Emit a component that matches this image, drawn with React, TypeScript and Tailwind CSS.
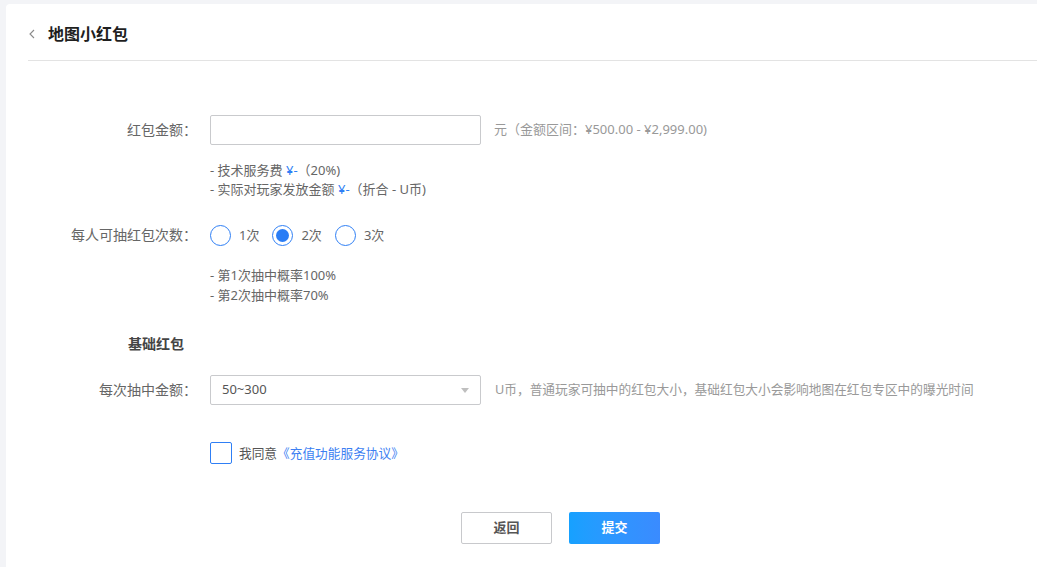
import { useState } from 'react'

const font = { fontFamily: '"Noto Sans", "Noto Sans CJK SC", sans-serif' }

function Radio({ checked, label, onClick }: { checked: boolean; label: string; onClick: () => void }) {
  return (
    <button type="button" onClick={onClick} className="flex items-center gap-[8px]">
      <span className="flex h-[21px] w-[21px] items-center justify-center rounded-full border border-[#2f7ff5] bg-white">
        {checked && <span className="h-[13px] w-[13px] rounded-full bg-[#2a7df5]" />}
      </span>
      <span className="text-[13px] leading-[21px] text-[#666]">{label}</span>
    </button>
  )
}

export default function App() {
  const [times, setTimes] = useState(2)
  const [agree, setAgree] = useState(false)

  return (
    <div className="min-h-screen bg-[#f3f4f7] pl-[6px] pt-[4px]" style={font}>
      <div className="h-[563px] rounded-tl-[4px] bg-white">
        {/* Header */}
        <div className="ml-[22px] flex h-[57px] items-center border-b border-[#e3e3e3] pt-[3px]">
          <svg className="ml-[1px] h-[10px] w-[6px]" viewBox="0 0 6 10" fill="none">
            <path d="M5 1 L1 5 L5 9" stroke="#8a8a8a" strokeWidth="1.1" />
          </svg>
          <span className="ml-[13px] text-[16px] font-bold leading-[22px] text-[#1f1f1f]">地图小红包</span>
        </div>

        {/* Form */}
        <div className="mt-[54px]">
          <div className="flex items-center">
            <label className="w-[191px] text-right text-[14px] leading-[30px] text-[#666]">红包金额：</label>
            <input className="ml-[13px] h-[30px] w-[271px] rounded-[2px] border border-[#c9cacd] px-[10px] text-[13px] outline-none" />
            <span className="ml-[13px] text-[13px] text-[#999]">元（金额区间：¥500.00 - ¥2,999.00)</span>
          </div>

          <div className="ml-[204px] mt-[16px] text-[13px] leading-[19px] text-[#666]">
            <div>
              - 技术服务费 <span className="text-[#2f7ff5]">¥-</span>（20%)
            </div>
            <div>
              - 实际对玩家发放金额 <span className="text-[#2f7ff5]">¥-</span>（折合 - U币)
            </div>
          </div>

          <div className="mt-[25px] flex items-center">
            <label className="w-[191px] text-right text-[14px] leading-[22px] text-[#666]">每人可抽红包次数：</label>
            <div className="ml-[13px] flex items-center gap-[13px]">
              {[1, 2, 3].map((n) => (
                <Radio key={n} checked={times === n} label={`${n}次`} onClick={() => setTimes(n)} />
              ))}
            </div>
          </div>

          <div className="ml-[204px] mt-[19px] text-[13px] leading-[20px] text-[#666]">
            <div>- 第1次抽中概率100%</div>
            <div>- 第2次抽中概率70%</div>
          </div>

          <div className="ml-[122px] mt-[29px] text-[14px] font-bold leading-[20px] text-[#444]">基础红包</div>

          <div className="mt-[21px] flex items-center">
            <label className="w-[191px] text-right text-[14px] leading-[30px] text-[#666]">每次抽中金额：</label>
            <div className="ml-[13px] flex h-[30px] w-[271px] items-center justify-between rounded-[2px] border border-[#c9cacd] pl-[11px] pr-[11px]">
              <span className="text-[13px] text-[#555]">50~300</span>
              <svg className="h-[5px] w-[8px]" viewBox="0 0 8 5">
                <path d="M0 0 H8 L4 5 Z" fill="#bfbfbf" />
              </svg>
            </div>
            <span className="ml-[14px] text-[12.7px] text-[#999]">
              U币，普通玩家可抽中的红包大小，基础红包大小会影响地图在红包专区中的曝光时间
            </span>
          </div>

          <div className="ml-[204px] mt-[37px] flex items-center">
            <button
              type="button"
              onClick={() => setAgree(!agree)}
              className="flex h-[22px] w-[22px] items-center justify-center rounded-[2px] border border-[#2f7ff5] bg-white"
            >
              {agree && (
                <svg className="h-[12px] w-[12px]" viewBox="0 0 12 12" fill="none">
                  <path d="M2 6 L5 9 L10 3" stroke="#2f7ff5" strokeWidth="1.6" />
                </svg>
              )}
            </button>
            <span className="ml-[7px] text-[12.7px] leading-[22px] text-[#555]">
              我同意<span className="text-[#3d7ff2]">《充值功能服务协议》</span>
            </span>
          </div>

          <div className="ml-[455px] mt-[48px] flex gap-[17px]">
            <button
              type="button"
              className="h-[32px] w-[91px] rounded-[2px] border border-[#c8c9cc] bg-white text-[13px] font-bold text-[#555]"
            >
              返回
            </button>
            <button
              type="button"
              className="h-[32px] w-[91px] rounded-[2px] bg-gradient-to-r from-[#16a1ff] to-[#3a8bff] text-[13px] font-bold text-white"
            >
              提交
            </button>
          </div>
        </div>
      </div>
    </div>
  )
}
